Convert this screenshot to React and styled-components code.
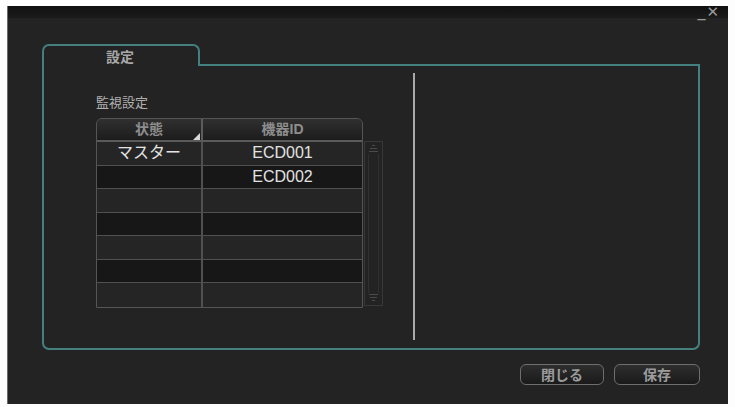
import styled, {createGlobalStyle} from "styled-components";

const GlobalStyle = createGlobalStyle`
  html, body {
    margin: 0;
    background: #fdfdfd;
  }
  body {
    font-family: "Liberation Sans", "Noto Sans CJK JP", sans-serif;
  }
`;

const Window = styled.div`
  margin: 6px 0 0 7px;
  width: 721px;
  height: 398px;
  background: #232323;
  border-left: 1px solid #6a6a6a;
  box-sizing: border-box;
  display: flex;
  flex-direction: column;
`;

const TitleBar = styled.div`
  height: 12px;
  background: linear-gradient(#101010, #1b1b1b);
  display: flex;
  justify-content: flex-end;
  align-items: flex-end;
  gap: 1px;
  padding-right: 9px;
  color: #9a9a9a;
  font-family: "DejaVu Sans", sans-serif;
  line-height: 1;
`;

const WinControl = styled.span`
  font-size: ${p => p.size}px;
  margin-bottom: ${p => p.down}px;
`;

const Body = styled.div`
  flex: 1;
  padding: 26px 28px 0 34px;
  display: flex;
  flex-direction: column;
`;

const TabRow = styled.div`
  display: flex;
  height: 22px;
`;

const Tab = styled.div`
  width: 158px;
  border: 2px solid #44807f;
  border-bottom: none;
  border-radius: 7px 7px 0 0;
  color: #a8a8a8;
  font-family: "Noto Sans CJK JP", sans-serif;
  font-size: 14px;
  font-weight: 700;
  padding: 2px 0 0 62px;
  box-sizing: border-box;
  line-height: 16px;
`;

const TabFill = styled.div`
  flex: 1;
  border-bottom: 2px solid #44807f;
`;

const Panel = styled.div`
  height: 284px;
  border: 2px solid #44807f;
  border-top: none;
  border-radius: 0 0 7px 7px;
  box-sizing: border-box;
  display: flex;
`;

const LeftPane = styled.div`
  width: 371px;
  margin: 7px 0 8px;
  border-right: 2px solid #a9a9a9;
  box-sizing: border-box;
  padding: 21px 0 0 52px;
`;

const SectionLabel = styled.div`
  color: #b0b0b0;
  font-family: "Noto Sans CJK JP", sans-serif;
  font-size: 13px;
  line-height: 16px;
  margin-bottom: 8px;
`;

const TableWrap = styled.div`
  display: flex;
  align-items: flex-start;
  gap: 1px;
`;

const Table = styled.div`
  width: 267px;
  border: 1px solid #555;
  border-radius: 6px 6px 0 0;
  box-sizing: border-box;
  overflow: hidden;
`;

const HeaderRow = styled.div`
  display: grid;
  grid-template-columns: 104px 1fr;
  height: 23px;
  background: linear-gradient(#303030, #1c1c1c);
  border-bottom: 2px solid #5a5a5a;
  box-sizing: border-box;
`;

const HeaderCell = styled.div`
  position: relative;
  color: #8e8e8e;
  font-family: "Liberation Sans", "Noto Sans CJK JP", sans-serif;
  font-size: 14px;
  font-weight: 700;
  text-align: center;
  line-height: 21px;
  border-left: ${p => (p.first ? "none" : "2px solid #5c5c5c")};
`;

const SortMark = styled.span`
  position: absolute;
  right: 1px;
  bottom: 0;
  width: 0;
  height: 0;
  border-left: 7px solid transparent;
  border-bottom: 7px solid #d8d8d8;
`;

const Row = styled.div`
  display: grid;
  grid-template-columns: 104px 1fr;
  height: 23.5px;
  background: ${p => (p.dark ? "#171717" : "#252525")};
  border-bottom: ${p => (p.last ? "none" : "1px solid #505050")};
  box-sizing: border-box;
`;

const Cell = styled.div`
  color: #e2e2e2;
  font-size: 16px;
  text-align: center;
  line-height: 22px;
  border-left: ${p => (p.first ? "none" : "2px solid #505050")};
`;

const ScrollBar = styled.div`
  margin-top: 23px;
  width: 19px;
  height: 165px;
  border: 1px solid #383838;
  box-sizing: border-box;
  display: flex;
  flex-direction: column;
  justify-content: space-between;
  align-items: center;
  padding: 2px 0;
`;

const ScrollTrack = styled.div`
  flex: 1;
  width: 9px;
  border-left: 1px solid #303030;
  border-right: 1px solid #303030;
`;

const RightPane = styled.div`
  flex: 1;
`;

const ButtonRow = styled.div`
  display: flex;
  justify-content: flex-end;
  gap: 10px;
  margin-top: 14px;
`;

const Button = styled.button`
  width: ${p => p.w}px;
  height: 21px;
  border: 1px solid #6e6e6e;
  border-radius: 6px;
  background: linear-gradient(#2e2e2e, #1a1a1a);
  color: #9c9c9c;
  font-family: "Noto Sans CJK JP", sans-serif;
  font-size: 14px;
  font-weight: 700;
  padding: 0;
  line-height: 19px;
`;

function ScrollArrow({down}) {
  return (
    <svg width="13" height="10" viewBox="0 0 13 10">
      <g stroke="#4a4a4a" strokeWidth="1">
        {down ? (
          <>
            <line x1="2" y1="1.5" x2="11" y2="1.5" />
            <line x1="3" y1="4.5" x2="10" y2="4.5" />
            <line x1="5" y1="7.5" x2="8" y2="7.5" />
          </>
        ) : (
          <>
            <line x1="5" y1="1.5" x2="8" y2="1.5" />
            <line x1="3" y1="4.5" x2="10" y2="4.5" />
            <line x1="2" y1="7.5" x2="11" y2="7.5" />
          </>
        )}
      </g>
    </svg>
  );
}

const rows = [
  {state: "マスター", id: "ECD001"},
  {state: "", id: "ECD002"},
  {state: "", id: ""},
  {state: "", id: ""},
  {state: "", id: ""},
  {state: "", id: ""},
  {state: "", id: ""},
];

export default function App() {
  return (
    <>
      <GlobalStyle />
      <Window>
        <TitleBar>
          <WinControl size={16} down={-1}>_</WinControl>
          <WinControl size={15} down={-2}>✕</WinControl>
        </TitleBar>
        <Body>
          <TabRow>
            <Tab>設定</Tab>
            <TabFill />
          </TabRow>
          <Panel>
            <LeftPane>
              <SectionLabel>監視設定</SectionLabel>
              <TableWrap>
                <Table>
                  <HeaderRow>
                    <HeaderCell first>
                      状態
                      <SortMark />
                    </HeaderCell>
                    <HeaderCell>機器ID</HeaderCell>
                  </HeaderRow>
                  {rows.map((row, i) => (
                    <Row key={i} dark={i % 2 === 1} last={i === rows.length - 1}>
                      <Cell first>{row.state}</Cell>
                      <Cell>{row.id}</Cell>
                    </Row>
                  ))}
                </Table>
                <ScrollBar>
                  <ScrollArrow />
                  <ScrollTrack />
                  <ScrollArrow down />
                </ScrollBar>
              </TableWrap>
            </LeftPane>
            <RightPane />
          </Panel>
          <ButtonRow>
            <Button w={84}>閉じる</Button>
            <Button w={86}>保存</Button>
          </ButtonRow>
        </Body>
      </Window>
    </>
  );
}
